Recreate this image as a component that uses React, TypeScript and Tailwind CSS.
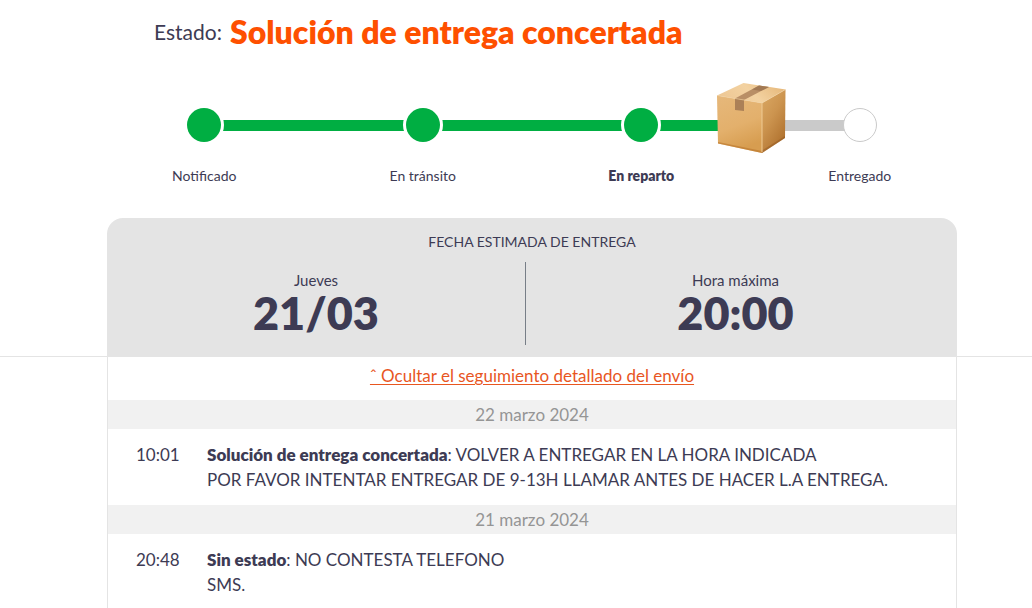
type Step = { label: string; left: string; right: string; dot: string; text?: string; parcel?: boolean };

const GREEN = "bg-[#00ae42]";
const GREEN_DOT = "bg-[#00ae42] ring-[3px] ring-white";

const steps: Step[] = [
  { label: "Notificado", left: "bg-transparent", right: GREEN, dot: GREEN_DOT },
  { label: "En tránsito", left: GREEN, right: GREEN, dot: GREEN_DOT },
  { label: "En reparto", left: GREEN, right: GREEN, dot: GREEN_DOT, text: "font-extrabold" },
  { label: "Entregado", left: "bg-[#cacaca]", right: "bg-transparent", dot: "border border-[#cacaca] bg-white", parcel: true },
];

const days = [
  {
    date: "22 marzo 2024",
    time: "10:01",
    status: "Solución de entrega concertada",
    note: "VOLVER A ENTREGAR EN LA HORA INDICADA",
    extra: "POR FAVOR INTENTAR ENTREGAR DE 9-13H LLAMAR ANTES DE HACER L.A ENTREGA.",
  },
  {
    date: "21 marzo 2024",
    time: "20:48",
    status: "Sin estado",
    note: "NO CONTESTA TELEFONO",
    extra: "SMS.",
  },
];

function Parcel() {
  return (
    <svg viewBox="0 0 70 72" className="absolute -bottom-3 left-0 z-10 h-[72px] w-[70px] -translate-x-1/2" aria-hidden="true">
      <defs>
        <linearGradient id="front" x1="0" y1="0" x2="0.3" y2="1">
          <stop offset="0" stopColor="#e6b87b" />
          <stop offset="0.6" stopColor="#e3b06c" />
          <stop offset="1" stopColor="#d79d50" />
        </linearGradient>
        <linearGradient id="side" x1="0" y1="0" x2="0.6" y2="1">
          <stop offset="0" stopColor="#dba965" />
          <stop offset="0.5" stopColor="#cc944f" />
          <stop offset="1" stopColor="#b0722f" />
        </linearGradient>
        <linearGradient id="lid" x1="0" y1="0.6" x2="1" y2="0.3">
          <stop offset="0" stopColor="#edc794" />
          <stop offset="0.5" stopColor="#f3d2a1" />
          <stop offset="1" stopColor="#e6b87a" />
        </linearGradient>
      </defs>
      <path d="M1 13.500 L46 21 L46 71 L2 61.500 Z" fill="url(#front)" />
      <path d="M46 21 L69.500 7.500 L69 56 L46 71 Z" fill="url(#side)" />
      <path d="M1 13.500 L27.500 1 L69.500 7.500 L46 21 Z" fill="url(#lid)" />
      <path d="M2 60 L46 69 L46 71 L2 61.500 Z" fill="#b9752c" opacity="0.6" />
      <path d="M46 68.500 L69 54 L69 56 L46 71 Z" fill="#8f541f" opacity="0.45" />
      <path d="M19 16.500 L43 3.500 L53 5 L28 18 Z" fill="#b98f66" />
      <path d="M36 7.500 L43 3.500 L53 5 L45 9 Z" fill="#996f4b" opacity="0.7" />
      <path d="M19 16.500 L28 18 L28 29 L19 28 Z" fill="#ab8057" />
      <path d="M1 13.500 L46 21 L69.500 7.500" fill="none" stroke="#f0d0a0" strokeWidth="0.6" />
      <path d="M46 21 L46 70" stroke="#efca94" strokeWidth="1" />
    </svg>
  );
}

function Timeline() {
  return (
    <ol className="mx-auto mt-14 grid max-w-[874px] grid-cols-4">
      {steps.map((s) => (
        <li key={s.label} className="flex flex-col items-center">
          <div className="relative flex w-full items-center">
            <span className={`-mr-1 h-[11px] flex-1 ${s.left}`} />
            <span className={`z-10 size-[34px] rounded-full ${s.dot}`} />
            <span className={`-ml-1 h-[11px] flex-1 ${s.right}`} />
            {s.parcel && <Parcel />}
          </div>
          <span className={`mt-6 text-sm leading-5 ${s.text ?? ""}`}>{s.label}</span>
        </li>
      ))}
    </ol>
  );
}

export default function App() {
  return (
    <div className="flex min-h-screen flex-col bg-white font-['Lato','Open_Sans',sans-serif] text-[#3d3b54]">
      <header className="pl-8">
        <h1 className="mx-auto flex max-w-[850px] items-center gap-2 pt-3 pl-[47px] text-[21px] leading-10">
          <span className="font-normal">Estado:</span>
          <strong className="text-[32px] leading-10 font-extrabold text-[#fe5000]">Solución de entrega concertada</strong>
        </h1>
        <Timeline />
        <section className="mx-auto mt-8 max-w-[850px] rounded-t-2xl bg-[#e4e4e4] pt-3.5 pb-[11px] text-center">
          <h2 className="text-sm leading-5">FECHA ESTIMADA DE ENTREGA</h2>
          <dl className="mt-2.5 grid grid-cols-2 divide-x divide-[#777e87] pr-3">
            <div className="h-[83px] pt-2">
              <dt className="text-[15px] leading-5">Jueves</dt>
              <dd className="text-[45px] leading-[46px] font-extrabold">21/03</dd>
            </div>
            <div className="h-[83px] pt-2">
              <dt className="text-[15px] leading-5">Hora máxima</dt>
              <dd className="text-[45px] leading-[46px] font-extrabold">20:00</dd>
            </div>
          </dl>
        </section>
      </header>
      <main className="flex flex-1 border-t border-[#e4e4e4] pl-8">
        <div className="mx-auto w-full max-w-[850px] border-x border-[#e4e4e4]">
          <div className="pt-1.5 pb-3 text-center text-[17px] leading-[25px]">
            <a href="#seguimiento" className="text-[#e8561f] underline underline-offset-2">ˆ Ocultar el seguimiento detallado del envío</a>
          </div>
          <div id="seguimiento" className="flex flex-col gap-[13px] text-[17px] leading-[25px]">
            {days.map((d) => (
              <section key={d.date}>
                <h3 className="bg-[#f1f1f1] py-0.5 text-center text-[#959595]">{d.date}</h3>
                <div className="flex pt-[13px]">
                  <time className="w-[99px] shrink-0 pl-7">{d.time}</time>
                  <div>
                    <p><strong className="font-extrabold">{d.status}</strong>: {d.note}</p>
                    <p>{d.extra}</p>
                  </div>
                </div>
              </section>
            ))}
          </div>
        </div>
      </main>
    </div>
  );
}
